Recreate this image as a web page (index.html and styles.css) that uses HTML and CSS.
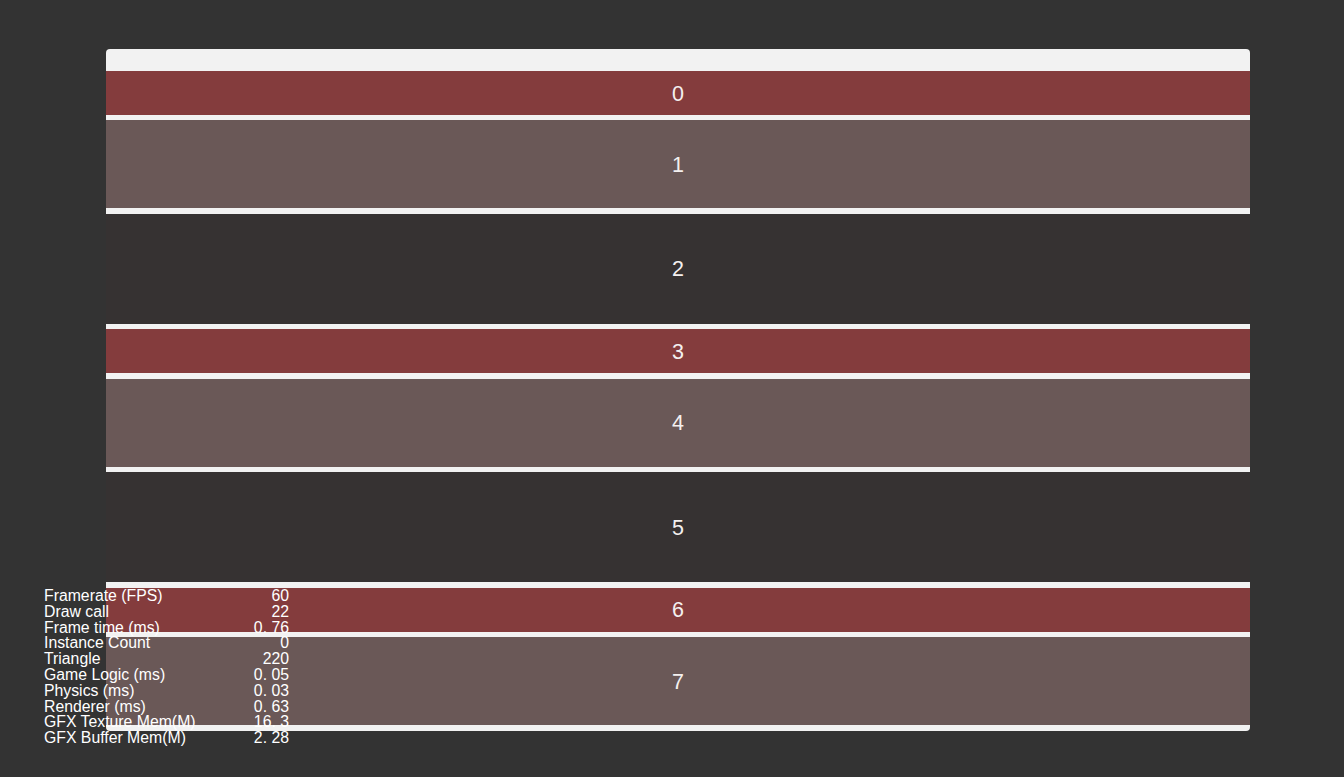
FILE: index.html
```html
<!DOCTYPE html>
<html lang="en">

<head>
    <meta charset="UTF-8">
    <meta name="viewport" content="width=device-width, initial-scale=1.0">
    <title>List</title>
    <link rel="stylesheet" href="styles.css">
</head>

<body>
    <div class="panel">
        <div class="item red small">0</div>
        <div class="item brown medium">1</div>
        <div class="item dark large">2</div>
        <div class="item red small">3</div>
        <div class="item brown medium">4</div>
        <div class="item dark large">5</div>
        <div class="item red small">6</div>
        <div class="item brown medium">7</div>
    </div>

    <div class="stats">
        <div class="stat"><span>Framerate (FPS)</span><span>60</span></div>
        <div class="stat"><span>Draw call</span><span>22</span></div>
        <div class="stat"><span>Frame time (ms)</span><span>0. 76</span></div>
        <div class="stat"><span>Instance Count</span><span>0</span></div>
        <div class="stat"><span>Triangle</span><span>220</span></div>
        <div class="stat"><span>Game Logic (ms)</span><span>0. 05</span></div>
        <div class="stat"><span>Physics (ms)</span><span>0. 03</span></div>
        <div class="stat"><span>Renderer (ms)</span><span>0. 63</span></div>
        <div class="stat"><span>GFX Texture Mem(M)</span><span>16. 3</span></div>
        <div class="stat"><span>GFX Buffer Mem(M)</span><span>2. 28</span></div>
    </div>
</body>

</html>
```

FILE: styles.css
```css
body {
    margin: 0;
    background: #333333;
    font-family: "Liberation Sans", Arial, sans-serif;
    height: 777px;
    overflow: hidden;
}

.panel {
    margin: 49px 0 0 106px;
    width: 1144px;
    background: #f2f2f2;
    border-radius: 4px;
    padding: 22px 0 6px;
    display: flex;
    flex-direction: column;
    gap: 5.45px;
}

.item {
    display: flex;
    align-items: center;
    justify-content: center;
    box-sizing: border-box;
    padding-top: 2px;
    color: #f4f0f0;
    font-size: 21.5px;
}

.small {
    height: 44px;
}

.medium {
    height: 88px;
}

.large {
    height: 110px;
}

.red {
    background: #843c3d;
}

.brown {
    background: #6a5857;
}

.dark {
    background: #363232;
}

.stats {
    position: absolute;
    left: 44px;
    top: 588px;
    width: 245px;
    color: #ffffff;
    font-size: 15.8px;
    line-height: 15.8px;
}

.stat {
    display: flex;
    justify-content: space-between;
}
```
